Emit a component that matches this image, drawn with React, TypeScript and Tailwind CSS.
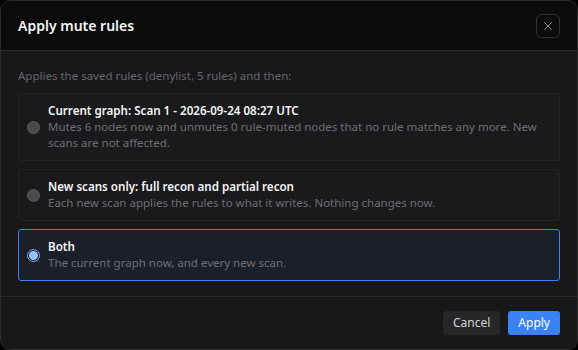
import { X } from 'lucide-react';

interface Option {
  id: string;
  title: string;
  description: string;
}

const options: Option[] = [
  {
    id: 'current',
    title: 'Current graph: Scan 1 - 2026-09-24 08:27 UTC',
    description:
      'Mutes 6 nodes now and unmutes 0 rule-muted nodes that no rule matches any more. New scans are not affected.',
  },
  {
    id: 'new',
    title: 'New scans only: full recon and partial recon',
    description: 'Each new scan applies the rules to what it writes. Nothing changes now.',
  },
  {
    id: 'both',
    title: 'Both',
    description: 'The current graph now, and every new scan.',
  },
];

function OptionCard({ option, selected }: { option: Option; selected: boolean }) {
  return (
    <label
      className={
        selected
          ? 'flex items-center gap-2 rounded-[3px] border border-[#3b82f6] bg-[#1b1f2a] py-[9px] pl-[8px] pr-3'
          : 'flex items-center gap-2 rounded-[3px] border border-[#242427] bg-[#1a1a1d] py-[9px] pl-[8px] pr-3'
      }
    >
      {selected ? (
        <span className="flex h-[13px] w-[13px] shrink-0 items-center justify-center rounded-full border border-[#7aa7f0] bg-[#1b1f2a]">
          <span className="h-[9px] w-[9px] rounded-full bg-[#93c5fd]" />
        </span>
      ) : (
        <span className="h-[13px] w-[13px] shrink-0 rounded-full border border-[#5a5a5e] bg-[#4a4a4e]" />
      )}
      <span className="flex flex-col">
        <span className="text-[11.6px] font-semibold leading-4 text-[#f4f4f5]">{option.title}</span>
        <span className="text-[11.5px] leading-4 text-[#6e6e74]">{option.description}</span>
      </span>
    </label>
  );
}

export default function App() {
  return (
    <div className="h-[350px] w-[578px] bg-black font-['Noto_Sans',sans-serif]">
      <div className="flex h-full flex-col overflow-hidden rounded-[10px] border border-[#2c2c2f] bg-[#18181b]">
        {/* Header */}
        <div className="flex h-[50px] shrink-0 items-center justify-between border-b border-[#2a2a2d] bg-[#0b0b0c] pl-[17px] pr-[17px]">
          <h2 className="text-[14px] font-semibold text-[#f4f4f5]">Apply mute rules</h2>
          <button className="flex h-6 w-6 items-center justify-center rounded-md border border-[#333336] text-[#a1a1aa]">
            <X className="h-[14px] w-[14px]" strokeWidth={1.5} />
          </button>
        </div>

        {/* Body */}
        <div className="flex flex-1 flex-col gap-2 px-[17px] pt-[17px]">
          <p className="mb-px text-[11.5px] leading-4 text-[#66666b]">
            Applies the saved rules (denylist, 5 rules) and then:
          </p>
          {options.map((o) => (
            <OptionCard key={o.id} option={o} selected={o.id === 'both'} />
          ))}
        </div>

        {/* Footer */}
        <div className="flex h-[53px] shrink-0 items-center justify-end gap-2 border-t border-[#2a2a2d] px-[17px]">
          <button className="h-6 rounded-[3px] bg-[#27272a] px-[10px] text-[12px] text-[#d4d4d8]">Cancel</button>
          <button className="h-6 rounded-[3px] bg-[#3b82f6] px-[10px] text-[12px] text-white">Apply</button>
        </div>
      </div>
    </div>
  );
}
